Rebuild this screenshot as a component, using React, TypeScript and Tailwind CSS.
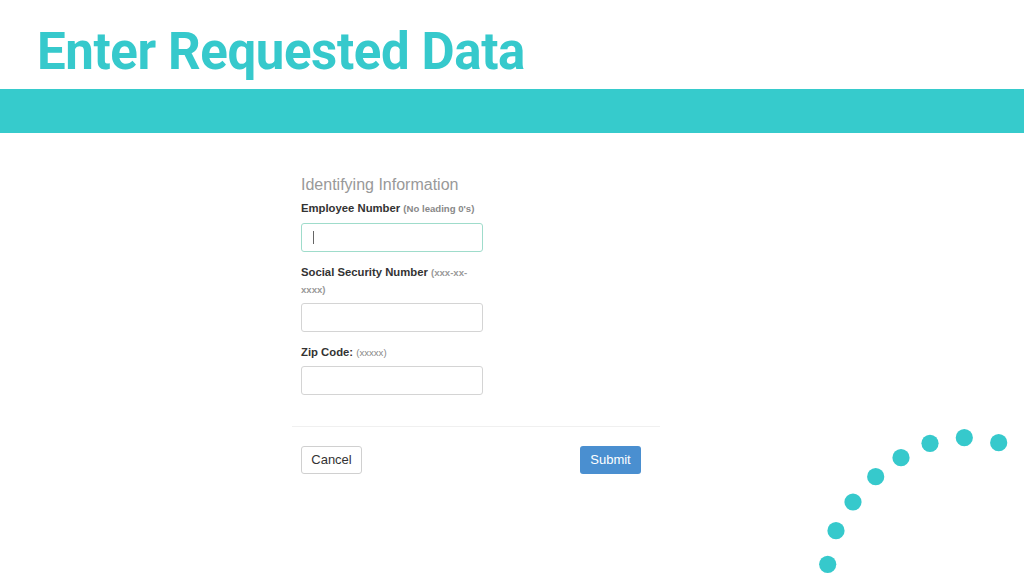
import React from "react";

const dots: [number, number][] = [
  [827.7, 564.3],
  [836, 530.7],
  [853, 502],
  [875.7, 476.7],
  [901, 457.7],
  [930, 443.3],
  [964.3, 437.7],
  [998.7, 442.7],
];

export default function App() {
  return (
    <div className="relative w-[1024px] h-[576px] overflow-hidden bg-white">
      <div className="h-[89px] pl-[37px] pt-[22px]">
        <h1
          className="text-[51px] leading-[60px] font-bold text-[#36c9cc] tracking-[-0.4px]"
          style={{ fontFamily: "Roboto, sans-serif" }}
        >
          Enter Requested Data
        </h1>
      </div>
      <div className="h-[44px] bg-[#36cbcc]" />

      <div
        className="pl-[292px] pt-[43px]"
        style={{ fontFamily: "'Liberation Sans', Arial, sans-serif" }}
      >
        <div className="w-[368px]">
          <div className="px-[9px]">
            <div className="text-[16px] leading-[18px] text-[#999]">
              Identifying Information
            </div>
            <div className="w-[182px]">
              <label className="block mt-[6px] text-[11.3px] leading-[17px] font-bold text-[#333]">
                Employee Number{" "}
                <span className="text-[9.6px] text-[#888]">(No leading 0's)</span>
              </label>
              <div className="mt-[6px] h-[29px] rounded-[3px] border border-[#9fdccb] flex items-center pl-[11px]">
                <div className="w-[1px] h-[13px] bg-[#666]" />
              </div>
              <label className="block mt-[12px] text-[11.3px] leading-[17px] font-bold text-[#333]">
                Social Security Number{" "}
                <span className="text-[9.6px] text-[#999]">(xxx-xx-xxxx)</span>
              </label>
              <div className="mt-[5px] h-[29px] rounded-[3px] border border-[#d4d4d4]" />
              <label className="block mt-[12px] text-[11.3px] leading-[17px] font-bold text-[#333]">
                Zip Code: <span className="text-[9.6px] font-normal text-[#888]">(xxxxx)</span>
              </label>
              <div className="mt-[5px] h-[29px] rounded-[3px] border border-[#d4d4d4]" />
            </div>
          </div>
          <div className="mt-[31px] h-px bg-[#f0f0f0]" />
          <div className="px-[9px] pt-[19px] flex justify-between pr-[19px]">
            <button className="h-[28px] w-[61px] rounded-[3px] border border-[#d0d0d0] bg-white text-[13px] text-[#333]">
              Cancel
            </button>
            <button className="h-[28px] w-[61px] rounded-[3px] bg-[#4a8fd0] text-[13px] text-white">
              Submit
            </button>
          </div>
        </div>
      </div>

      <svg className="absolute left-0 top-0" width="1024" height="576">
        {dots.map(([x, y], i) => (
          <circle key={i} cx={x} cy={y} r={8.6} fill="#36c9cc" />
        ))}
      </svg>
    </div>
  );
}
